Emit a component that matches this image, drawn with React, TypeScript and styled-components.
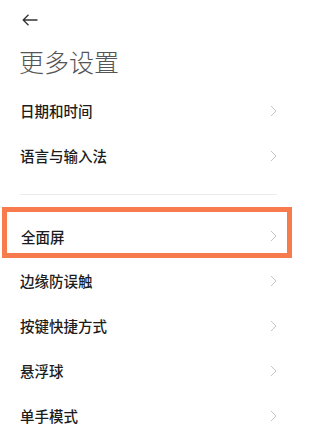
import styled, { createGlobalStyle } from "styled-components";

const GlobalStyle = createGlobalStyle`
  html, body {
    margin: 0;
    padding: 0;
    background: #ffffff;
  }
  body {
    font-family: "Noto Sans CJK SC", "Noto Sans", sans-serif;
  }
`;

const groups: string[][] = [
  ["日期和时间", "语言与输入法"],
  ["全面屏", "边缘防误触", "按键快捷方式", "悬浮球", "单手模式"],
];

const highlighted = "全面屏";

const Chevron = () => (
  <svg width="7" height="12" viewBox="0 0 7 12" fill="none">
    <path d="M1 1 L6 6 L1 11" stroke="#c4c4c4" strokeWidth="1" />
  </svg>
);

const BackArrow = () => (
  <svg width="16" height="12" viewBox="0 0 16 12" fill="none">
    <path
      d="M15.5 6 H1 M6.5 0.8 L1.2 6 L6.5 11.2"
      stroke="#333"
      strokeWidth="1.3"
    />
  </svg>
);

const App = () => {
  return (
    <Page>
      <GlobalStyle />
      <Header>
        <BackArrow />
      </Header>
      <Title>更多设置</Title>
      {groups.map((group, gi) => (
        <Group key={gi}>
          {gi > 0 && <Divider />}
          {group.map((label) =>
            label === highlighted ? (
              <HighlightRow key={label}>
                <RowLabel>{label}</RowLabel>
                <Chevron />
              </HighlightRow>
            ) : (
              <Row key={label}>
                <RowLabel>{label}</RowLabel>
                <Chevron />
              </Row>
            )
          )}
        </Group>
      ))}
    </Page>
  );
};

const Page = styled.div`
  width: 302px;
  height: 438px;
  overflow: hidden;
  background: #ffffff;
  display: flex;
  flex-direction: column;
`;

const Header = styled.div`
  height: 40px;
  padding-left: 22px;
  display: flex;
  align-items: center;
`;

const Title = styled.h1`
  margin: 0;
  height: 48px;
  line-height: 42px;
  padding-left: 19px;
  font-size: 25px;
  font-weight: 300;
  color: #555555;
`;

const Group = styled.div`
  display: flex;
  flex-direction: column;
`;

const Divider = styled.div`
  margin: 16px 25px 12px 20px;
  height: 1px;
  background: #ececec;
`;

const Row = styled.div`
  height: 45px;
  padding: 0 25px 0 20px;
  display: flex;
  align-items: center;
  justify-content: space-between;
`;

const HighlightRow = styled(Row)`
  height: 51px;
  box-sizing: border-box;
  margin: 0 10px 0 2px;
  padding: 7px 10px 0 14px;
  border: 5px solid #f77b4d;
`;

const RowLabel = styled.span`
  font-size: 14.5px;
  font-weight: 500;
  color: #1c1c1c;
`;

export default App;
